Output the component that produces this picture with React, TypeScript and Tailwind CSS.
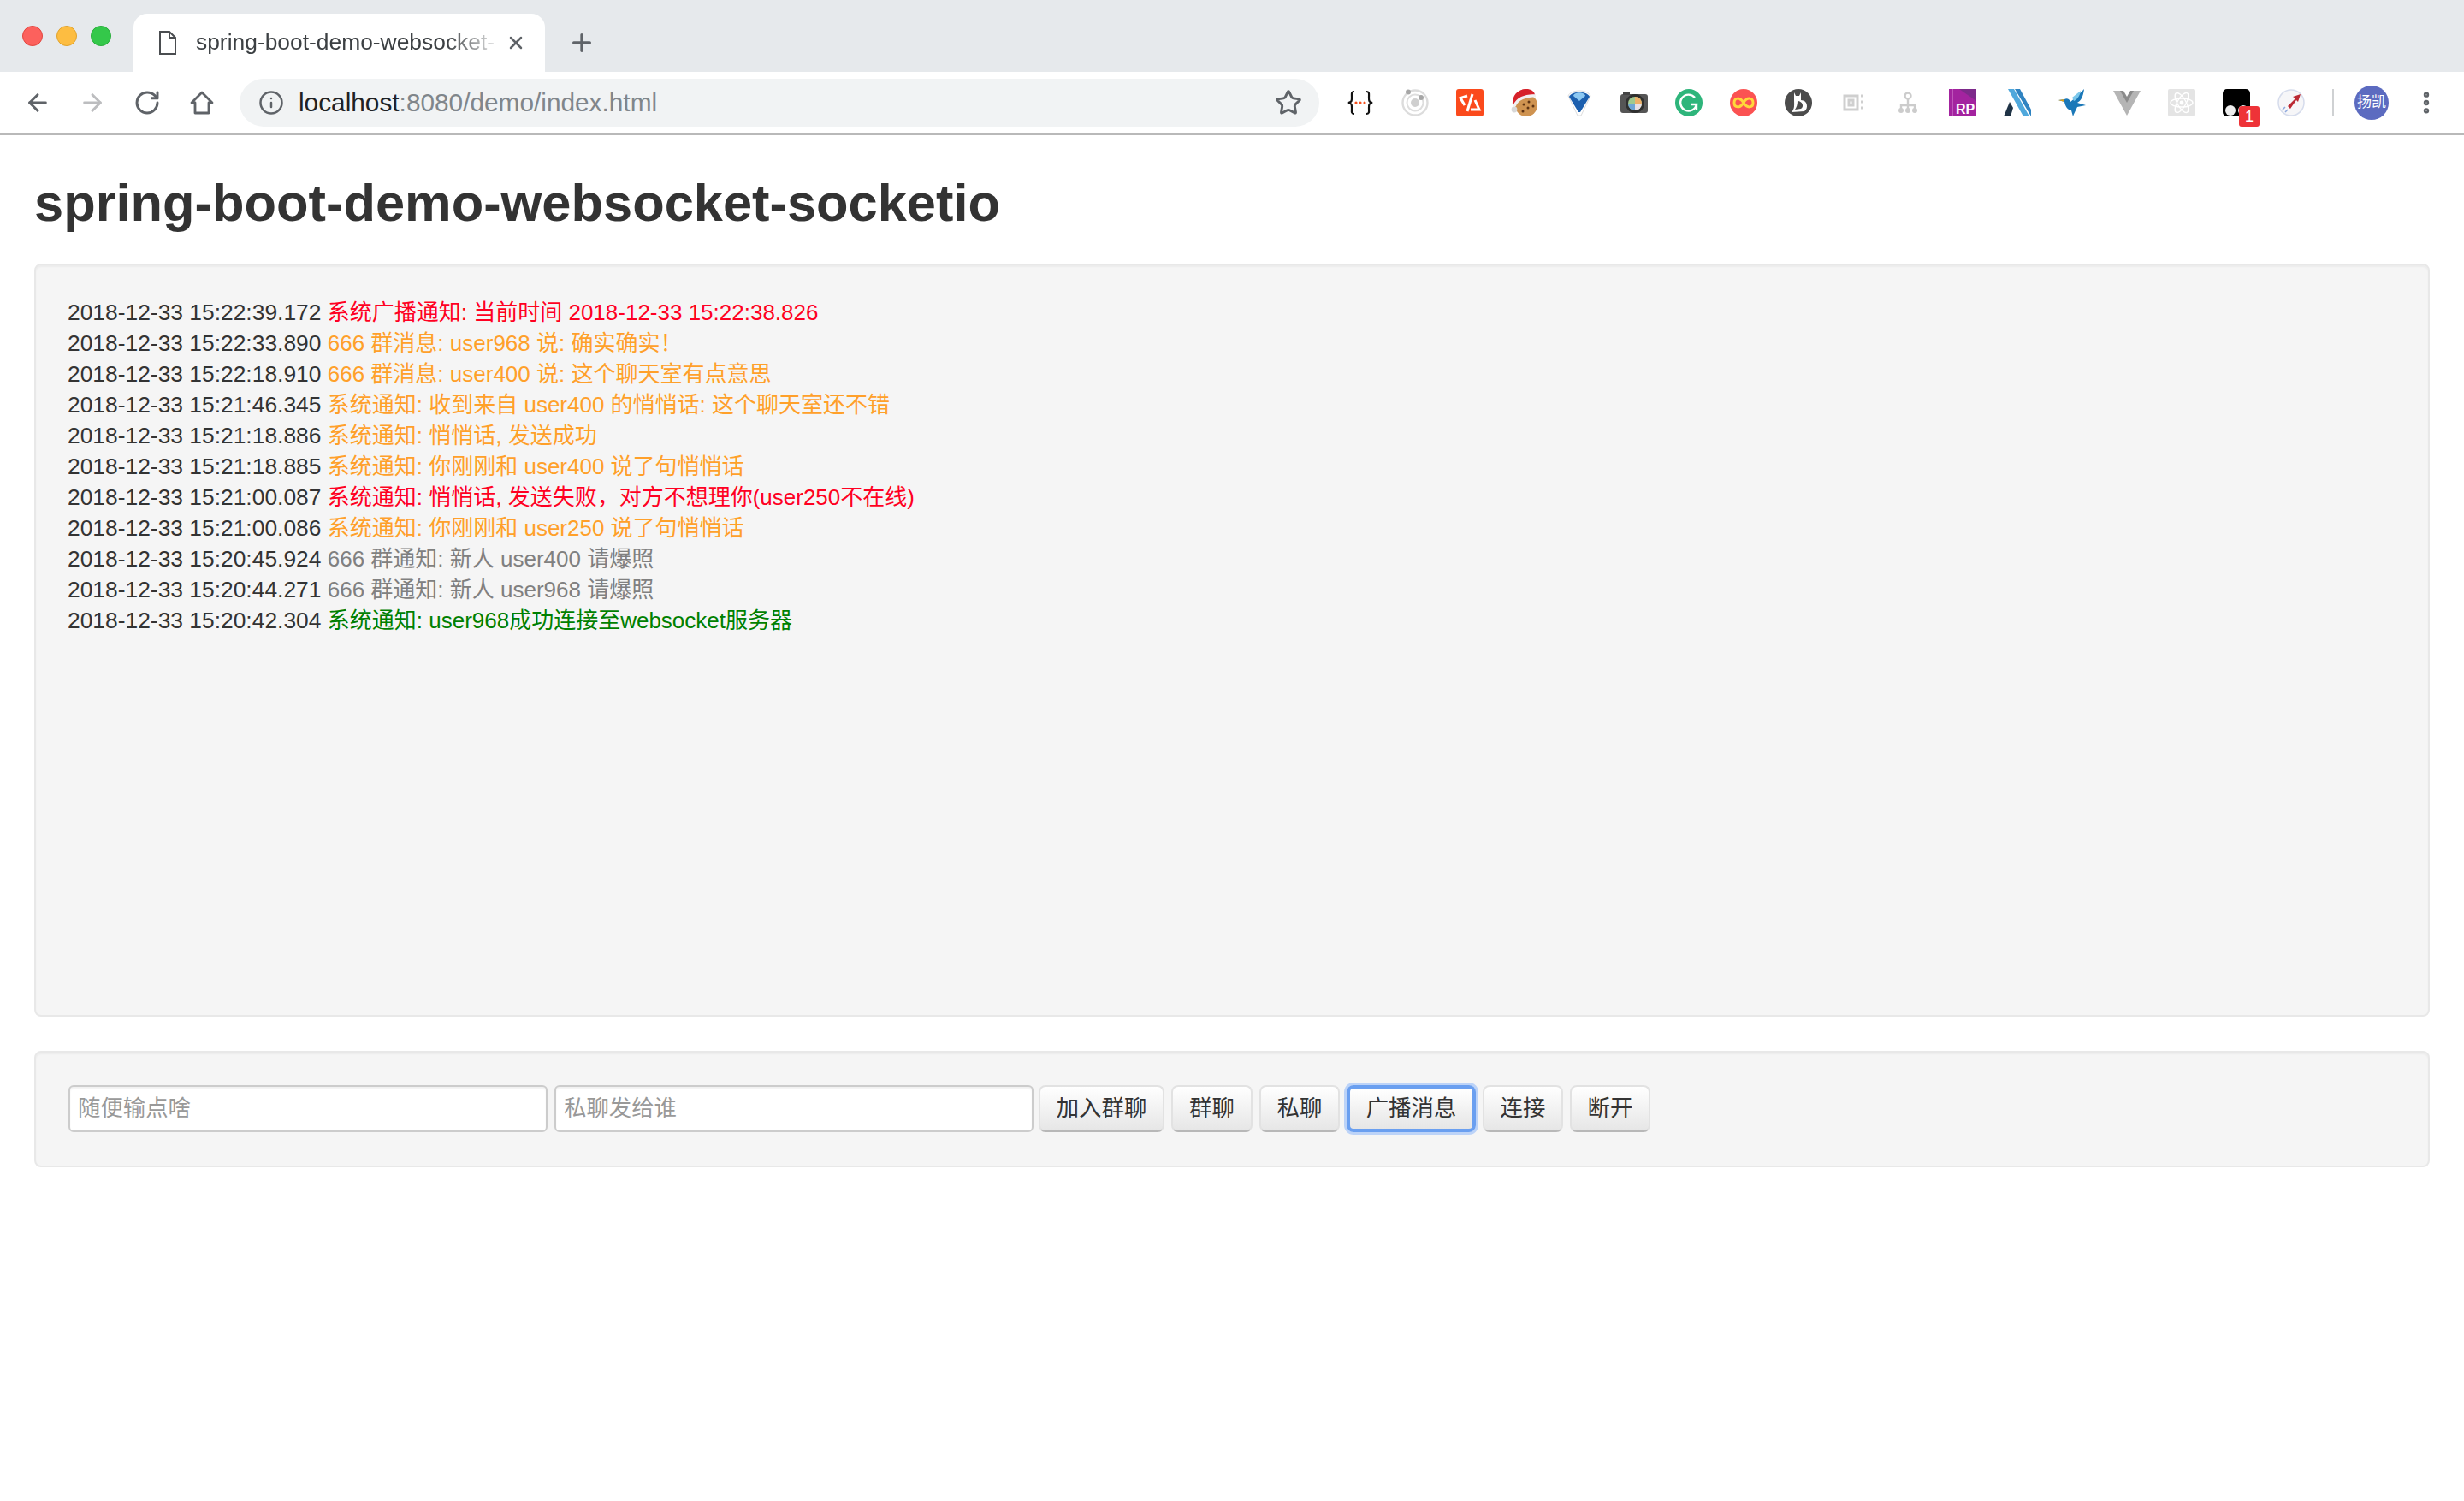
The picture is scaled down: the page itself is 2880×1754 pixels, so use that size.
import { ArrowLeft, ArrowRight, Info, MoreVertical, Plus, RotateCw, Star, X } from 'lucide-react';

const cjk = "font-['Liberation_Sans','Noto_Sans_CJK_SC',sans-serif]";

const logs: { time: string; text: string; color: string }[] = [
  { time: '2018-12-33 15:22:39.172', text: '系统广播通知: 当前时间 2018-12-33 15:22:38.826', color: 'text-[#ff0022]' },
  { time: '2018-12-33 15:22:33.890', text: '666 群消息: user968 说: 确实确实！', color: 'text-[#ffa02a]' },
  { time: '2018-12-33 15:22:18.910', text: '666 群消息: user400 说: 这个聊天室有点意思', color: 'text-[#ffa02a]' },
  { time: '2018-12-33 15:21:46.345', text: '系统通知: 收到来自 user400 的悄悄话: 这个聊天室还不错', color: 'text-[#ffa02a]' },
  { time: '2018-12-33 15:21:18.886', text: '系统通知: 悄悄话, 发送成功', color: 'text-[#ffa02a]' },
  { time: '2018-12-33 15:21:18.885', text: '系统通知: 你刚刚和 user400 说了句悄悄话', color: 'text-[#ffa02a]' },
  { time: '2018-12-33 15:21:00.087', text: '系统通知: 悄悄话, 发送失败，对方不想理你(user250不在线)', color: 'text-[#ff0022]' },
  { time: '2018-12-33 15:21:00.086', text: '系统通知: 你刚刚和 user250 说了句悄悄话', color: 'text-[#ffa02a]' },
  { time: '2018-12-33 15:20:45.924', text: '666 群通知: 新人 user400 请爆照', color: 'text-[#808080]' },
  { time: '2018-12-33 15:20:44.271', text: '666 群通知: 新人 user968 请爆照', color: 'text-[#808080]' },
  { time: '2018-12-33 15:20:42.304', text: '系统通知: user968成功连接至websocket服务器', color: 'text-[#008000]' },
];

// extension icons, same order as the toolbar
const extensions = [
  <svg key="json" viewBox="0 0 32 32" className="w-8 h-8">
    <path d="M9 3 C5 3 6 6 6 10 C6 14 6 15 2 16 C6 17 6 18 6 22 C6 26 5 29 9 29" fill="none" stroke="#111" strokeWidth="2.2" />
    <path d="M23 3 C27 3 26 6 26 10 C26 14 26 15 30 16 C26 17 26 18 26 22 C26 26 27 29 23 29" fill="none" stroke="#111" strokeWidth="2.2" />
    <circle cx="11" cy="16" r="1.6" fill="#f4511e" />
    <circle cx="16" cy="16" r="1.6" fill="#f4511e" />
    <circle cx="21" cy="16" r="1.6" fill="#f4511e" />
  </svg>,
  <svg key="ionic" viewBox="0 0 32 32" className="w-8 h-8">
    <circle cx="16" cy="16" r="14.5" fill="none" stroke="#dcdcdc" strokeWidth="2.4" />
    <circle cx="16" cy="16" r="9.5" fill="none" stroke="#dedede" strokeWidth="2" />
    <circle cx="16" cy="16" r="5" fill="#cfcfcf" />
    <circle cx="8" cy="3.5" r="3" fill="#a6a6a6" />
    <circle cx="23" cy="10" r="3" fill="#a6a6a6" />
  </svg>,
  <svg key="pastel" viewBox="0 0 32 32" className="w-8 h-8">
    <rect width="32" height="32" rx="3" fill="#fb4a1c" />
    <path d="M13 8 L5 10.5 L10 19" stroke="#fff" strokeWidth="3" fill="none" />
    <path d="M19 6 L13 26" stroke="#fff" strokeWidth="3" fill="none" />
    <path d="M22 13 L27 24 L17 24" stroke="#fff" strokeWidth="3" fill="none" />
  </svg>,
  <svg key="cookie" viewBox="0 0 32 32" className="w-8 h-8">
    <circle cx="18" cy="19" r="13" fill="#cf9350" />
    <circle cx="15" cy="18" r="1.5" fill="#5f3414" />
    <circle cx="21" cy="15" r="1.5" fill="#5f3414" />
    <circle cx="20" cy="22" r="1.5" fill="#5f3414" />
    <circle cx="26" cy="20" r="1.5" fill="#5f3414" />
    <circle cx="14" cy="26" r="1.5" fill="#5f3414" />
    <path d="M2 18 C1 6 10 -1 20 0 C25 1 28 4 28 7 C18 6 10 11 6 19 Z" fill="#d6222a" />
    <path d="M4 20 C7 12 16 7 29 8" stroke="#f1f1f1" strokeWidth="3.4" fill="none" />
    <circle cx="4" cy="24" r="3.4" fill="#d8d8d8" />
  </svg>,
  <svg key="funnel" viewBox="0 0 32 32" className="w-8 h-8">
    <path d="M3 8 C6 0 26 0 29 8 L18 31 L14 31 Z" fill="#fff" stroke="#ddd" strokeWidth="1" />
    <path d="M4 9 C7 2 25 2 28 9 L17 27 L15 27 Z" fill="#1c5fae" />
    <path d="M9 8 C10 3 22 3 23 8 L16 14 Z" fill="#8cc8f2" />
  </svg>,
  <svg key="camera" viewBox="0 0 32 32" className="w-8 h-8">
    <rect x="0" y="6" width="32" height="22" rx="3" fill="#555" />
    <rect x="3" y="3" width="8" height="4" fill="#444" />
    <circle cx="17" cy="17" r="11" fill="#2f2f2f" />
    <circle cx="17" cy="17" r="8" fill="#9fc98f" />
    <path d="M17 9 A8 8 0 0 1 25 17 H17 Z" fill="#eeb06a" />
    <path d="M17 17 H25 A8 8 0 0 1 17 25 Z" fill="#e8dfe6" />
    <path d="M17 17 V25 A8 8 0 0 1 9 17 Z" fill="#6ea5d6" />
  </svg>,
  <svg key="grammarly" viewBox="0 0 32 32" className="w-8 h-8">
    <circle cx="16" cy="16" r="16" fill="#2eb57b" />
    <path d="M23 10 A9.5 9.5 0 1 0 25 18 L18 18" fill="none" stroke="#fff" strokeWidth="2.4" />
    <path d="M25 18 L25 24" stroke="#fff" strokeWidth="2.4" />
  </svg>,
  <svg key="infinity" viewBox="0 0 32 32" className="w-8 h-8">
    <circle cx="16" cy="16" r="16" fill="#fb5252" />
    <path d="M16 16 C12 9 5 10 5 16 C5 22 12 23 16 16 C20 9 27 10 27 16 C27 22 20 23 16 16 Z" fill="none" stroke="#ffd83a" strokeWidth="3" />
  </svg>,
  <svg key="cat" viewBox="0 0 32 32" className="w-8 h-8">
    <circle cx="16" cy="16" r="16" fill="#4c4c4c" />
    <path d="M11 4 L13 8 L17 8 L19 4 L19 13 C27 13 28 23 23 26 L8 27 C12 23 11 18 11 13 Z" fill="#fff" />
    <path d="M15 14 C21 14 23 21 19 23 L12 24 C14 21 15 18 15 14 Z" fill="#4c4c4c" />
  </svg>,
  <svg key="maze" viewBox="0 0 32 32" className="w-8 h-8">
    <path d="M6 8 H21 V24 H6 Z M11 13 H16 V19 H11 Z" fill="none" stroke="#cfcfcf" strokeWidth="3" />
    <path d="M25 8 H27 M25 15 H27 M25 22 H27" stroke="#cfcfcf" strokeWidth="3" />
  </svg>,
  <svg key="tree" viewBox="0 0 32 32" className="w-8 h-8">
    <circle cx="16" cy="8" r="3.5" fill="none" stroke="#ccc" strokeWidth="2.4" />
    <path d="M16 11 V19 M8 23 V19 H24 V23 M16 19 V23" fill="none" stroke="#ccc" strokeWidth="2.4" />
    <circle cx="8" cy="25" r="3" fill="#ccc" />
    <circle cx="16" cy="25" r="3" fill="#ccc" />
    <circle cx="24" cy="25" r="3" fill="#ccc" />
  </svg>,
  <svg key="axure" viewBox="0 0 32 32" className="w-8 h-8">
    <rect width="32" height="32" fill="#a3239f" />
    <path d="M12 0 H32 V14 Z" fill="#7d2a8a" />
    <rect x="3" y="0" width="1.5" height="32" fill="#d98ad6" />
    <text x="19" y="29" textAnchor="middle" fontSize="16" fontWeight="700" fontFamily="Liberation Sans" fill="#fff">RP</text>
  </svg>,
  <svg key="lambda" viewBox="0 0 32 32" className="w-8 h-8">
    <path d="M5 0 H12 L30 32 H23 Z" fill="#4fa8dc" />
    <path d="M13 0 H19 L32 24 V32 Z" fill="#2f83c1" />
    <path d="M7 15 L11 22 L8 32 H0 Z" fill="#1f3346" />
  </svg>,
  <svg key="bird" viewBox="0 0 32 32" className="w-8 h-8">
    <path d="M0 13 L7 12 C10 10 13 12 14 15 L20 10 L30 0 C29 9 26 14 22 16 L32 19 L22 21 C20 25 18 29 17 32 L15 25 C10 24 8 20 7 15 Z" fill="#1b78b8" />
    <path d="M16 10 L26 2 C25 8 22 12 18 14 Z" fill="#7cc7ea" />
    <path d="M0 13 L7 12 L7 15 Z" fill="#e3a21a" />
  </svg>,
  <svg key="vue" viewBox="0 0 32 32" className="w-8 h-8">
    <path d="M0 2 H32 L16 31 Z" fill="#b5b5b5" />
    <path d="M8 2 H24 L16 16 Z" fill="#8b8b8b" />
    <path d="M12 2 H20 L16 9 Z" fill="#fff" />
  </svg>,
  <svg key="react" viewBox="0 0 32 32" className="w-8 h-8">
    <rect width="32" height="32" rx="2" fill="#e4e4e4" />
    <ellipse cx="16" cy="16" rx="13" ry="5" fill="none" stroke="#fff" strokeWidth="1.4" />
    <ellipse cx="16" cy="16" rx="13" ry="5" fill="none" stroke="#fff" strokeWidth="1.4" transform="rotate(60 16 16)" />
    <ellipse cx="16" cy="16" rx="13" ry="5" fill="none" stroke="#fff" strokeWidth="1.4" transform="rotate(120 16 16)" />
    <circle cx="16" cy="16" r="2.4" fill="#fff" />
  </svg>,
  <div key="badge" className="relative w-8 h-8">
    <svg viewBox="0 0 32 32" className="w-8 h-8">
      <rect width="32" height="32" rx="5" fill="#000" />
      <circle cx="9" cy="25" r="6" fill="#eee" />
      <circle cx="24" cy="25" r="6" fill="#eee" />
    </svg>
    <span className={`absolute left-[19px] top-[20px] w-[24px] h-[24px] rounded-[3px] bg-[#ee3338] text-white text-[18px] leading-[24px] text-center ${cjk}`}>1</span>
  </div>,
  <svg key="rocket" viewBox="0 0 32 32" className="w-8 h-8">
    <circle cx="16" cy="16" r="15" fill="#f6f6f8" stroke="#d6dcec" strokeWidth="1.5" />
    <path d="M12 20 L21 11 L18 9 L27 6 L24 15 L22 13 L15 23 Z" fill="#bb2a34" />
    <path d="M6 24 L9 21 M9 27 L12 24" stroke="#8ea8dd" strokeWidth="1.5" />
  </svg>,
];

function NavButton({ children }: { children: React.ReactNode }) {
  return <div className="w-16 h-full flex items-center justify-center">{children}</div>;
}

function ChatButton({ label, className = '' }: { label: string; className?: string }) {
  return (
    <button
      className={`h-[55px] rounded-[8px] bg-gradient-to-b from-white to-[#e6e6e6] text-[26.4px] leading-[32px] pb-[2px] text-[#333] ${className}`}
    >
      {label}
    </button>
  );
}

const plainButton = 'border-2 border-[#e2e2e2] border-b-[#b8b8b8]';

export default function App() {
  return (
    <div className={`min-h-screen bg-white text-[#333] ${cjk}`}>
      {/* tab strip */}
      <div className="h-[84px] bg-[#e6e9ec] flex items-end">
        <div className="w-[156px] h-full flex items-center gap-[16px] pl-[26px]">
          <span className="w-6 h-6 rounded-full bg-[#fc615d] border border-[#e2463f]" />
          <span className="w-6 h-6 rounded-full bg-[#fdbd41] border border-[#e0a32e]" />
          <span className="w-6 h-6 rounded-full bg-[#34c84a] border border-[#2aad3c]" />
        </div>
        <div className="w-[481px] h-[68px] bg-white rounded-t-[16px] flex items-center pl-[30px] pr-[22px]">
          <svg viewBox="0 0 20 28" className="w-5 h-7 shrink-0">
            <path d="M1 1 H12 L19 8 V27 H1 Z M12 1 V8 H19" fill="none" stroke="#4a4d50" strokeWidth="2" />
          </svg>
          <div className="ml-[23px] whitespace-nowrap text-[26.4px] text-[#3c4043] [mask-image:linear-gradient(to_right,black_84%,rgba(0,0,0,0.15))]">
            spring-boot-demo-websocket-
          </div>
          <X className="ml-auto w-6 h-6 text-[#5f6368]" strokeWidth={2.5} />
        </div>
        <div className="h-[68px] flex items-center ml-[27px]">
          <Plus className="w-8 h-8 text-[#5f6368]" strokeWidth={2.5} />
        </div>
      </div>

      {/* toolbar */}
      <div className="h-[74px] border-b-2 border-[#b9b9b9] flex items-center pl-[12px]">
        <div className="flex h-full items-center">
          <NavButton><ArrowLeft className="w-8 h-8 text-[#5f6368]" strokeWidth={2.2} /></NavButton>
          <NavButton><ArrowRight className="w-8 h-8 text-[#bcbdbf]" strokeWidth={2.2} /></NavButton>
          <NavButton><RotateCw className="w-8 h-8 text-[#5f6368]" strokeWidth={2.2} /></NavButton>
          <NavButton>
            <svg viewBox="0 0 28 28" className="w-7 h-7">
              <path d="M14 2 L26 14 H22 V26 H6 V14 H2 Z" fill="none" stroke="#5f6368" strokeWidth="2.8" strokeLinejoin="round" />
            </svg>
          </NavButton>
        </div>
        <div className="ml-[12px] w-[1262px] h-[56px] rounded-full bg-[#f1f3f4] flex items-center pl-[22px] pr-[20px]">
          <Info className="w-[30px] h-[30px] text-[#5f6368] shrink-0" strokeWidth={2} />
          <span className="ml-[17px] text-[29.8px] text-[#80868b] whitespace-nowrap">
            <span className="text-[#202124]">localhost</span>:8080/demo/index.html
          </span>
          <Star className="ml-auto w-8 h-8 text-[#5f6368]" strokeWidth={2.2} />
        </div>
        <div className="ml-[16px] flex items-center">
          {extensions.map((icon, i) => (
            <div key={i} className="w-16 flex items-center justify-center">{icon}</div>
          ))}
        </div>
        <div className="ml-[16px] w-[2px] h-8 bg-[#cfd1d3]" />
        <div className="ml-[24px] w-10 h-10 rounded-full bg-[#5c6bc0] text-white text-[17px] leading-[40px] text-center whitespace-nowrap">扬凯</div>
        <MoreVertical className="ml-[28px] w-8 h-8 text-[#5f6368]" strokeWidth={2.8} />
      </div>

      {/* page */}
      <div className="px-[40px]">
        <h1 className="h-[150px] pt-[8px] flex items-center text-[61.4px] font-bold text-[#333] whitespace-nowrap">
          spring-boot-demo-websocket-socketio
        </h1>

        <div className="h-[880px] rounded-[8px] border-2 border-[#e8e8e8] bg-[#f5f5f5] shadow-[inset_0_2px_2px_rgba(0,0,0,0.04)] pt-[37px] pl-[37px]">
          {logs.map((row) => (
            <div key={row.time} className="h-9 text-[26.4px] leading-[36px] whitespace-nowrap">
              {row.time} <span className={`${row.color} text-[26px]`}>{row.text}</span>
            </div>
          ))}
        </div>

        <div className="mt-[40px] h-[136px] rounded-[8px] border-2 border-[#e8e8e8] bg-[#f5f5f5] shadow-[inset_0_2px_2px_rgba(0,0,0,0.04)] pt-[38px] pl-[38px] flex gap-[8px] items-start">
          <input
            placeholder="随便输点啥"
            className="w-[560px] h-[55px] rounded-[6px] border-2 border-[#cccccc] bg-white px-[9px] text-[26.4px] shadow-[inset_0_2px_2px_rgba(0,0,0,0.06)] placeholder:text-[#999]"
          />
          <input
            placeholder="私聊发给谁"
            className="w-[560px] h-[55px] rounded-[6px] border-2 border-[#cccccc] bg-white px-[9px] text-[26.4px] shadow-[inset_0_2px_2px_rgba(0,0,0,0.06)] placeholder:text-[#999]"
          />
          <ChatButton label="加入群聊" className={`w-[147px] -ml-[2px] ${plainButton}`} />
          <ChatButton label="群聊" className={`w-[95px] ${plainButton}`} />
          <ChatButton label="私聊" className={`w-[94px] ${plainButton}`} />
          <ChatButton label="广播消息" className="w-[151px] border-[4px] border-[#6a9ff0] ring-[3px] ring-[#bcd3f8]" />
          <ChatButton label="连接" className={`w-[94px] ${plainButton}`} />
          <ChatButton label="断开" className={`w-[94px] ${plainButton}`} />
        </div>
      </div>
    </div>
  );
}
